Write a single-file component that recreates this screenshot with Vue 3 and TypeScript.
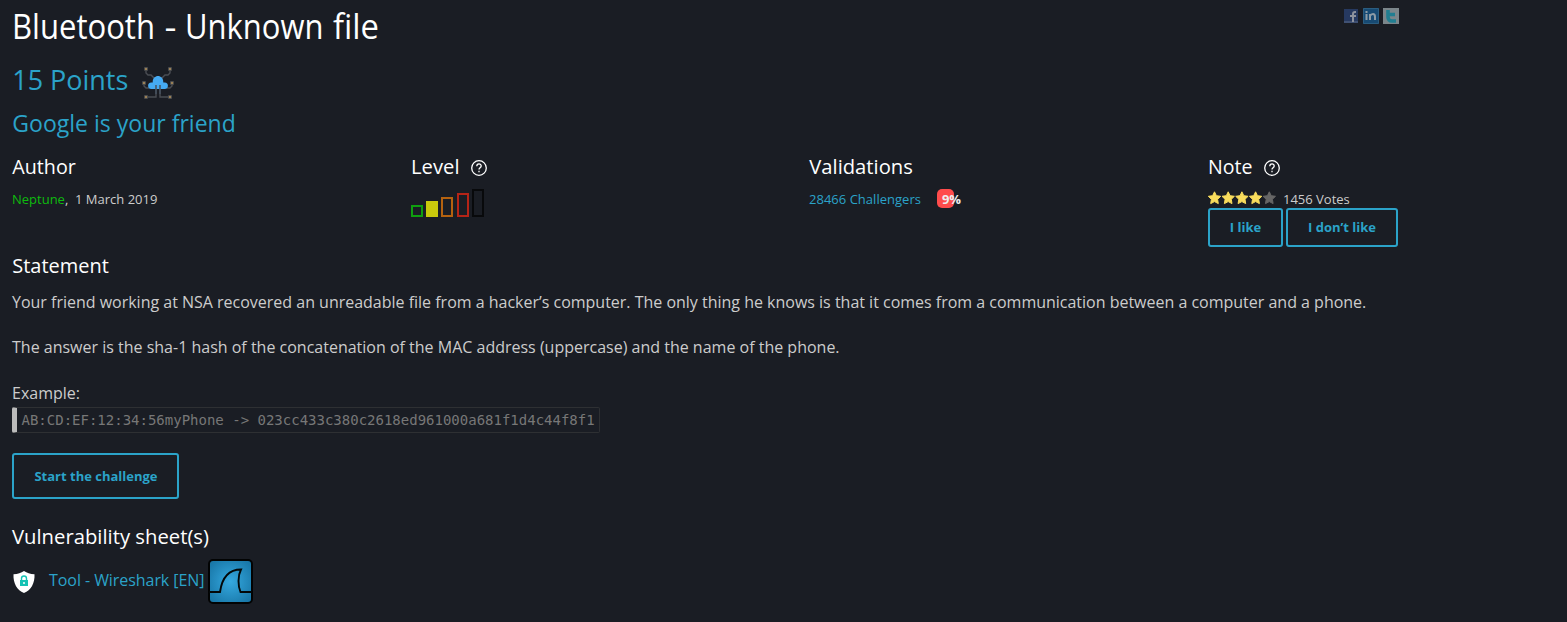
<script setup lang="ts">
interface Bar { x: number; h: number; color: string; filled?: boolean }
interface Word { text: string; x: number; width: number }
const bars: Bar[] = [
  { x: 0, h: 12, color: '#0f9f0f' },
  { x: 15, h: 16, color: '#c9c90c', filled: true },
  { x: 30, h: 20, color: '#b5620f' },
  { x: 46, h: 24, color: '#b52417' },
  { x: 61, h: 28, color: '#08090b' },
]
const title: Word[] = [
  { text: 'Bluetooth', x: 0, width: 143 },
  { text: '-', x: 152.5, width: 12 },
  { text: 'Unknown', x: 173, width: 138.5 },
  { text: 'file', x: 321, width: 46 },
]
const stars: boolean[] = [true, true, true, true, false]
const nodes: [number, number][] = [[4, 3], [28, 3], [2, 17], [30, 17], [4, 31], [28, 31]]
</script>

<template>
  <main class="page">
    <header class="top">
      <h1><svg width="380" height="52"><text v-for="w in title" :key="w.text" :x="w.x" y="39" :textLength="w.width" lengthAdjust="spacingAndGlyphs" font-size="34.5">{{ w.text }}</text></svg></h1>
      <div class="social">
        <svg class="fb" width="14" height="14" viewBox="0 0 14 14"><path fill="#263960" d="M0 0h14v14H0z" /><path fill="#405173" d="M0 12h14v2H0z" /><path d="M12 3h-1Q9 3 9 5v8M6 7h6" fill="none" stroke="#8d929d" stroke-width="2" /></svg>
        <svg width="16" height="16" viewBox="0 0 16 16"><rect width="16" height="16" rx="1" fill="#174a73" /><path d="M.5.5h15v15H.5z" fill="none" stroke="#2b5d80" /><path d="M3.5 6v6M3.5 3v2M7 12V6M7 8q1-2 3-2 2 0 2 3v3" fill="none" stroke="#8d9ba6" stroke-width="2" /></svg>
        <svg width="16" height="16" viewBox="0 0 16 16"><path fill="#7b868b" d="M0 0h16v16H0z" /><path d="M5 2v7q0 4 4 4h4M5 6.500h7" fill="none" stroke="#217e91" stroke-width="3.6" /></svg>
      </div>
    </header>

    <div class="points">
      <svg width="130" height="53"><text x="0.300" y="37.500" textLength="116" lengthAdjust="spacingAndGlyphs" font-size="27.300">15 Points</text></svg>
      <svg class="cloud" width="32" height="34" viewBox="0 0 32 34">
        <path d="M4 4v3l2 2h3l4 4M28 4v3l-2 2h-3l-4 4M2 17v3l2 2h3M30 17v3l-2 2h-3M4 31h10V20M28 31H18V20" fill="none" stroke="#4a4d53" stroke-width="1.400" />
        <path d="M9.500 23a3.300 3.300 0 0 1-.2-6.600h1.400C10.500 8 21.500 8 21.300 16.400h1.400a3.300 3.300 0 0 1-.2 6.600z" fill="#45aaf2" />
        <path d="M14 19v9M18 19v9" stroke="#46525f" stroke-width="1.500" />
        <g v-for="(n, i) in nodes" :key="i"><rect :x="n[0] - 2" :y="n[1] - 2" width="4" height="4" rx="1" fill="#4a4b4d" /><rect :x="n[0] - 1" :y="n[1] - 1" width="2" height="2" fill="#9b8055" /></g>
      </svg>
    </div>
    <div class="subtitle"><svg width="230" height="41"><text x="0.300" y="27" textLength="223.500" lengthAdjust="spacingAndGlyphs" font-size="23.400">Google is your friend</text></svg></div>

    <section class="info">
      <div>
        <h2><svg width="100" height="36"><text x="0.300" y="28" textLength="63.500" lengthAdjust="spacingAndGlyphs" font-size="20.700">Author</text></svg></h2>
        <p class="small"><a class="green">Neptune</a>,&nbsp; 1 March 2019</p>
      </div>
      <div>
        <h2>
          <svg width="60" height="36"><text x="0" y="28" textLength="48.500" lengthAdjust="spacingAndGlyphs" font-size="20.700">Level</text></svg>
          <svg class="help" width="16" height="16" viewBox="0 0 16 16"><circle cx="8" cy="8" r="7.300" /><path d="M5.800 6.200C5.800 3.200 10.300 3.300 10.200 6c0 1.700-2.200 1.700-2.200 3.400M8 10.700v1.500" /></svg>
        </h2>
        <svg class="levels" width="74" height="29" viewBox="0 0 74 29">
          <rect v-for="b in bars" :key="b.x" :x="b.x + 1" :y="29 - b.h" width="10" :height="b.h - 2" :fill="b.filled ? b.color : 'none'" :stroke="b.color" stroke-width="2" />
        </svg>
      </div>
      <div>
        <h2><svg width="120" height="36"><text x="0.300" y="28" textLength="103.500" lengthAdjust="spacingAndGlyphs" font-size="20.700">Validations</text></svg></h2>
        <p class="small"><a class="challengers">28466 Challengers</a><span class="gauge"><span>9%</span></span></p>
      </div>
      <div>
        <h2>
          <svg width="56" height="36"><text x="0" y="28" textLength="44.500" lengthAdjust="spacingAndGlyphs" font-size="20.700">Note</text></svg>
          <svg class="help" width="16" height="16" viewBox="0 0 16 16"><circle cx="8" cy="8" r="7.300" /><path d="M5.800 6.200C5.800 3.200 10.300 3.300 10.200 6c0 1.700-2.200 1.700-2.200 3.400M8 10.700v1.500" /></svg>
        </h2>
        <div class="votes">
          <svg width="70" height="14" viewBox="0 0 70 14">
            <path v-for="(on, i) in stars" :key="i" :transform="`translate(${i * 13.7} 0)`" :fill="on ? '#f8dc5c' : '#666'" stroke-linejoin="round" :stroke="on ? '#f8dc5c' : '#666'" stroke-width="1" d="M6.500.8l1.900 3.900 4.300.6-3.100 3 .7 4.300-3.800-2-3.800 2 .7-4.300-3.100-3 4.300-.6z" />
          </svg>
          <span>1456 Votes</span>
        </div>
        <div class="buttons"><button class="like">I like</button><button class="dislike">I don’t like</button></div>
      </div>
    </section>

    <h2><svg width="120" height="36"><text x="0.300" y="26" textLength="96.500" lengthAdjust="spacingAndGlyphs" font-size="20.700">Statement</text></svg></h2>
    <div class="statement">
      <p class="lead">Your friend working at NSA recovered an unreadable file from a hacker’s computer. The only thing he knows is that it comes from a communication between a computer and a phone.</p>
      <p class="answer">The answer is the sha-1 hash of the concatenation of the MAC address (uppercase) and the name of the phone.</p>
      <p class="example">Example:</p>
      <code>AB:CD:EF:12:34:56myPhone -&gt; 023cc433c380c2618ed961000a681f1d4c44f8f1</code>
    </div>
    <button class="start">Start the challenge</button>

    <h2 class="sheets"><svg width="220" height="36"><text x="0" y="27" textLength="197" lengthAdjust="spacingAndGlyphs" font-size="20.700">Vulnerability sheet(s)</text></svg></h2>
    <div class="tool">
      <svg class="shield" width="22" height="22" viewBox="0 0 22 22"><path fill="#fff" d="M11 0c3 2 6 3 10.500 3.300C22 12 18 19.500 11 22 4 19.500 0 12 .5 3.300 5 3 8 2 11 0z" /><path fill="#14c3b4" d="M7 9h8v6H7z" /><path d="M8.500 9V7.500a2.500 2.500 0 0 1 5 0V9" fill="none" stroke="#14c3b4" stroke-width="1.400" /><circle cx="11" cy="12" r="1" fill="#fff" /></svg>
      <a>Tool - Wireshark [EN]</a>
      <svg class="shark" width="45" height="45" viewBox="0 0 45 45">
        <defs><radialGradient id="sea" r=".6"><stop offset="0" stop-color="#35a9e0" /><stop offset="1" stop-color="#1978a9" /></radialGradient></defs>
        <rect x="1" y="1" width="43" height="43" rx="4" fill="url(#sea)" stroke="#020303" stroke-width="2" />
        <path d="M1 33h11C14 19 21 10.500 33 10.500 29.500 17 30 27 32.500 33H44" fill="none" stroke="#030809" stroke-width="1.900" />
      </svg>
    </div>
  </main>
</template>

<style>
html, body { background: #1a1d24; overflow: hidden; }
</style>
<style scoped>
* { box-sizing: border-box; }
.page { height: 622px; padding-left: 12px; background: #1a1d24; color: #ccc; font: 16px/24px "Open Sans", sans-serif; overflow: hidden; }
svg { display: block; flex: none; overflow: visible; }
h1, h2, p { margin: 0; font-weight: 400; }
h1, h2 { color: #fff; fill: #fff; }
h2 { display: flex; height: 36px; }
a { color: #2ba3c9; }
.green { color: #0ebb0e; }
.top { display: flex; height: 52px; }
.social { display: flex; gap: 4px; margin: 8px 0 0 952px; align-items: flex-start; }
.fb { margin-top: 1px; margin-right: 1px; }
.points { display: flex; height: 53px; fill: #2ba3c9; }
.cloud { margin-top: 14px; }
.subtitle { height: 41px; fill: #2ba3c9; }
.info { display: grid; grid-template-columns: 398.500px 398.500px 398.500px 1fr; height: 101px; }
.small { display: flex; height: 38px; margin-top: 5px; font-size: 13px; line-height: 24px; }
.challengers { letter-spacing: .02px; }
.help { margin-top: 14px; fill: none; stroke: #fff; stroke-width: 1.300; }
.levels { margin-top: 7px; }
.gauge { width: 17px; height: 19px; margin: 2px 0 0 16px; padding-left: 5px; border-radius: 5px; background: #ff4c4c; color: #eee; font-size: 13px; font-weight: 700; line-height: 20px; white-space: nowrap; letter-spacing: -.1px; }
.votes { display: flex; gap: 5.500px; height: 18px; margin-top: 5px; font-size: 13px; line-height: 24px; }
.votes svg { margin-top: 4px; }
.buttons { display: flex; gap: 3px; margin-top: 3px; }
button { display: block; padding: 0 0 1px 1px; border: 2px solid #2ba3c9; border-radius: 3px; background: transparent; color: #2ba3c9; font: 700 13px/20px "Open Sans", sans-serif; }
.like { width: 75px; height: 39px; padding-bottom: 2px; }
.dislike { width: 112px; height: 39px; padding-bottom: 2px; }
.statement p { white-space: nowrap; }
.statement { height: 163px; padding-top: 7px; }
.statement .lead { height: 45px; letter-spacing: -.008px; }
.statement .answer { height: 46px; }
.statement .example { height: 26px; }
code { display: block; width: 588px; height: 26px; padding-left: 4.500px; border: 1px solid #2e3033; border-left: 5px solid #bbb; border-radius: 2px; color: #777; font: 14px/24px "DejaVu Sans Mono", monospace; }
.start { width: 167px; height: 46px; margin-top: 7px; }
.sheets { margin-top: 18px; }
.tool { display: flex; margin-top: 6px; }
.shield { margin: 12px 14px 0 1px; }
.tool a { margin-top: 9px; width: 159px; white-space: nowrap; letter-spacing: -.06px; }
</style>
